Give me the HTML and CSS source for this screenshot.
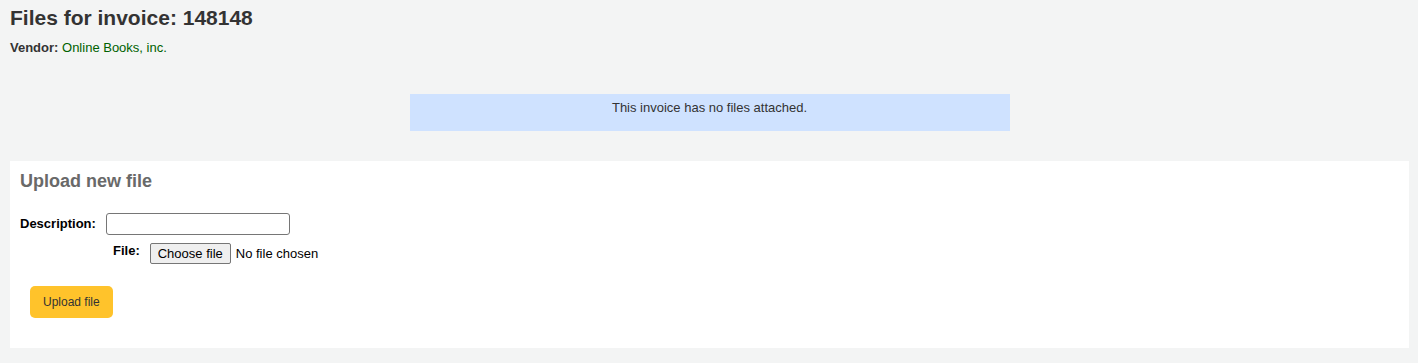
FILE: index.html
```html
<!DOCTYPE html>
<html lang="en">
  <head>
    <title>Files for invoice: 148148</title>
    <meta charset="utf-8">
    <link rel="stylesheet" href="styles.css">
  </head>
  <body>
    <div id="container">
      <h1 id="page-title">Files for invoice: 148148</h1>
      <p id="vendor"><strong>Vendor:</strong> <a href="#">Online Books, inc.</a></p>
      <div class="alert">This invoice has no files attached.</div>
      <form class="panel">
        <h3>Upload new file</h3>
        <div class="field-row">
          <label for="description">Description:</label>
          <input id="description" class="text-input" type="text">
        </div>
        <div class="field-row field-file">
          <label for="uploadfile">File:</label>
          <span class="file-picker">
            <input id="uploadfile" class="file-native" type="file">
            <label class="file-button" for="uploadfile">Choose file</label>
            <span class="file-name">No file chosen</span>
          </span>
        </div>
        <div class="action">
          <button class="btn-upload" type="button">Upload file</button>
        </div>
      </form>
    </div>
  </body>
</html>
```

FILE: styles.css
```css
body {
  margin: 0;
  font-family: "Liberation Sans", Arial, sans-serif;
  font-size: 13px;
  line-height: 16px;
  color: #333;
  background-color: #f3f4f4;
}
#container {
  padding: 6px 9px 15px 10px;
}
#page-title {
  margin: 0;
  font-size: 21px;
  line-height: 24px;
  font-weight: bold;
  color: #333;
}
#vendor {
  margin: 10px 0 0;
}
#vendor a {
  color: #006100;
  text-decoration: none;
}
.alert {
  width: 600px;
  box-sizing: border-box;
  margin: 38px auto 0;
  padding: 6px 10px 15px;
  text-align: center;
  background-color: #cfe2ff;
}
.panel {
  margin-top: 30px;
  padding: 10px 10px 30px;
  background-color: #fff;
}
.panel h3 {
  margin: 0;
  font-size: 18px;
  line-height: 21px;
  color: #696969;
}
.field-row {
  display: flex;
  align-items: center;
  gap: 10px;
}
.field-row > label {
  font-weight: bold;
  color: #000;
}
.field-row + .field-row {
  margin-top: 8px;
}
.panel h3 + .field-row {
  margin-top: 21px;
}
.field-file {
  align-items: flex-start;
  margin-left: 93px;
}
.text-input {
  width: 184px;
  height: 22px;
  box-sizing: border-box;
  margin: 0;
  padding: 1px 4px;
  border: 1px solid #767676;
  border-radius: 3px;
  font-family: inherit;
  font-size: 13px;
}
.file-picker {
  display: flex;
  align-items: center;
  gap: 5px;
  color: #000;
}
.file-native {
  position: absolute;
  width: 1px;
  height: 1px;
  opacity: 0;
  overflow: hidden;
}
.file-button {
  height: 21px;
  box-sizing: border-box;
  padding: 2px 7px 1px;
  border: 1px solid #767676;
  border-radius: 2px;
  background-color: #efefef;
  cursor: default;
}
.action {
  margin-top: 22px;
  padding-left: 10px;
}
.btn-upload {
  height: 32px;
  padding: 0 13px;
  border: 0;
  border-radius: 5px;
  font-family: inherit;
  font-size: 12px;
  color: #333;
  background-color: #ffc32b;
}
```
